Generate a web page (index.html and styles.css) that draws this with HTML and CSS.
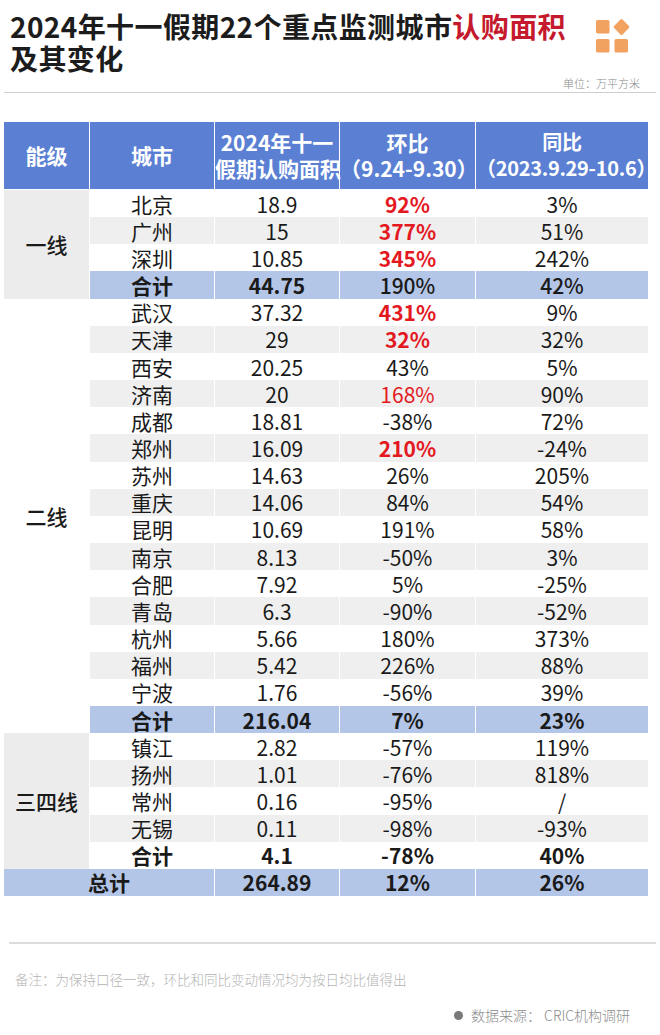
FILE: index.html
```html
<!DOCTYPE html>
<html lang="zh-CN">
<head>
<meta charset="utf-8">
<title>2024年十一假期22个重点监测城市认购面积及其变化</title>
<link rel="stylesheet" href="styles.css">
</head>
<body>
<div class="page">
  <header class="top">
    <div class="title-row">
      <h1 class="title">2024年十一假期22个重点监测城市<span class="hl">认购面积</span><br>及其变化</h1>
      <svg class="logo" width="36" height="36" viewBox="0 0 36 36" aria-hidden="true">
        <rect x="0" y="2" width="13.5" height="13.5" rx="1.5" fill="#f1a261"/>
        <rect x="19.5" y="3" width="12" height="12" rx="1.5" fill="#f1a261" transform="rotate(45 25.5 9)"/>
        <rect x="0" y="21" width="13.5" height="13.5" rx="1.5" fill="#f1a261"/>
        <rect x="18.5" y="21" width="13.5" height="13.5" rx="1.5" fill="#f1a261"/>
      </svg>
    </div>
    <div class="unit">单位：万平方米</div>
  </header>
  <div class="rule"></div>

  <table class="data">
    <colgroup>
      <col class="c1"><col class="c2"><col class="c3"><col class="c4"><col class="c5">
    </colgroup>
    <thead>
      <tr>
        <th>能级</th>
        <th>城市</th>
        <th>2024年十一<br>假期认购面积</th>
        <th>环比<br>（9.24-9.30）</th>
        <th class="narrow">同比<br>（2023.9.29-10.6）</th>
      </tr>
    </thead>
    <tbody>
      <tr><td class="tier grey" rowspan="4">一线</td><td>北京</td><td>18.9</td><td class="up">92%</td><td>3%</td></tr>
      <tr class="alt"><td>广州</td><td>15</td><td class="up">377%</td><td>51%</td></tr>
      <tr><td>深圳</td><td>10.85</td><td class="up">345%</td><td>242%</td></tr>
      <tr class="sum"><td>合计</td><td>44.75</td><td class="semi">190%</td><td class="semi">42%</td></tr>

      <tr><td class="tier" rowspan="16">二线</td><td>武汉</td><td>37.32</td><td class="up">431%</td><td>9%</td></tr>
      <tr class="alt"><td>天津</td><td>29</td><td class="up">32%</td><td>32%</td></tr>
      <tr><td>西安</td><td>20.25</td><td>43%</td><td>5%</td></tr>
      <tr class="alt"><td>济南</td><td>20</td><td class="up light">168%</td><td>90%</td></tr>
      <tr><td>成都</td><td>18.81</td><td>-38%</td><td>72%</td></tr>
      <tr class="alt"><td>郑州</td><td>16.09</td><td class="up">210%</td><td>-24%</td></tr>
      <tr><td>苏州</td><td>14.63</td><td>26%</td><td>205%</td></tr>
      <tr class="alt"><td>重庆</td><td>14.06</td><td>84%</td><td>54%</td></tr>
      <tr><td>昆明</td><td>10.69</td><td>191%</td><td>58%</td></tr>
      <tr class="alt"><td>南京</td><td>8.13</td><td>-50%</td><td>3%</td></tr>
      <tr><td>合肥</td><td>7.92</td><td>5%</td><td>-25%</td></tr>
      <tr class="alt"><td>青岛</td><td>6.3</td><td>-90%</td><td>-52%</td></tr>
      <tr><td>杭州</td><td>5.66</td><td>180%</td><td>373%</td></tr>
      <tr class="alt"><td>福州</td><td>5.42</td><td>226%</td><td>88%</td></tr>
      <tr><td>宁波</td><td>1.76</td><td>-56%</td><td>39%</td></tr>
      <tr class="sum"><td>合计</td><td>216.04</td><td>7%</td><td>23%</td></tr>

      <tr><td class="tier grey" rowspan="5">三四线</td><td>镇江</td><td>2.82</td><td>-57%</td><td>119%</td></tr>
      <tr class="alt"><td>扬州</td><td>1.01</td><td>-76%</td><td>818%</td></tr>
      <tr><td>常州</td><td>0.16</td><td>-95%</td><td>/</td></tr>
      <tr class="alt"><td>无锡</td><td>0.11</td><td>-98%</td><td>-93%</td></tr>
      <tr class="bold"><td>合计</td><td>4.1</td><td>-78%</td><td>40%</td></tr>

      <tr class="sum total"><td colspan="2">总计</td><td>264.89</td><td>12%</td><td>26%</td></tr>
    </tbody>
  </table>

  <footer class="foot">
    <div class="foot-rule"></div>
    <p class="note">备注：为保持口径一致，环比和同比变动情况均为按日均比值得出</p>
    <p class="source"><span class="dot"></span>数据来源： CRIC机构调研</p>
  </footer>
</div>
</body>
</html>
```

FILE: styles.css
```css
* { box-sizing: border-box; }

html, body {
  margin: 0;
  padding: 0;
  background: #ffffff;
}

body {
  font-family: "Noto Sans CJK SC", "Noto Sans", "Liberation Sans", sans-serif;
  color: #1a1a1a;
  width: 660px;
}

.page {
  padding: 0 4px;
}

.title-row {
  display: flex;
  justify-content: space-between;
  align-items: flex-start;
}

.title {
  margin: 0;
  padding: 10px 0 0 6px;
  font-size: 28px;
  line-height: 32px;
  font-weight: 700;
  color: #1c1c1c;
  letter-spacing: 0.4px;
}

.title .hl {
  color: #c5192d;
}

.logo {
  display: block;
  margin: 18px 24px 0 0;
  flex: none;
}

.unit {
  margin-top: 2px;
  padding-right: 16px;
  text-align: right;
  font-size: 11px;
  line-height: 14px;
  color: #8a8a8a;
  font-weight: 300;
}

.rule {
  margin-top: 2px;
  height: 1px;
  background: #cfcfcf;
}

.data {
  margin-top: 29px;
  width: 644px;
  table-layout: fixed;
  border-collapse: separate;
  border-spacing: 0;
}

.c1 { width: 86px; }
.c2 { width: 125px; }
.c3 { width: 125px; }
.c4 { width: 136px; }
.c5 { width: 172px; }

.data th,
.data td {
  padding: 0;
  text-align: center;
  white-space: nowrap;
  border-right: 1px solid #ffffff;
}

.data th:last-child,
.data td:last-child {
  border-right: 0;
}

.data th {
  background: #5a7fd3;
  color: #ffffff;
  font-size: 21px;
  line-height: 26px;
  font-weight: 700;
  height: 68px;
  padding: 7px 0 8px;
  border-bottom: 1px solid #ffffff;
}

.data th.narrow {
  font-size: 20px;
  letter-spacing: -0.3px;
}

.data td {
  font-size: 21px;
  line-height: 26px;
  height: 27.17px;
  font-weight: 400;
  color: #1a1a1a;
}

.data td.tier {
  background: #ffffff;
  font-weight: 500;
}

.data td.tier.grey {
  background: #ececec;
}

.data tr.alt td:not(.tier) {
  background: #efefef;
}

.data tr.sum td {
  background: #b4c6e7;
  font-weight: 700;
}

.data tr.sum td.semi {
  font-weight: 500;
}

.data tr.bold td {
  font-weight: 700;
}

.data td.up {
  color: #e3191f;
  font-weight: 700;
}

.data td.up.light {
  font-weight: 400;
}

.foot-rule {
  margin: 46px 0 0 5px;
  height: 2px;
  background: #dcdcdc;
}

.note {
  margin: 26px 0 0 11px;
  font-size: 13.5px;
  line-height: 18px;
  color: #b3b3b3;
  font-weight: 300;
}

.source {
  margin: 18px 26px 0 0;
  display: flex;
  justify-content: flex-end;
  align-items: center;
  font-size: 14px;
  line-height: 18px;
  color: #8c8c8c;
  font-weight: 300;
}

.dot {
  width: 9px;
  height: 9px;
  border-radius: 50%;
  background: #7a7a7a;
  margin-right: 8px;
}
```
